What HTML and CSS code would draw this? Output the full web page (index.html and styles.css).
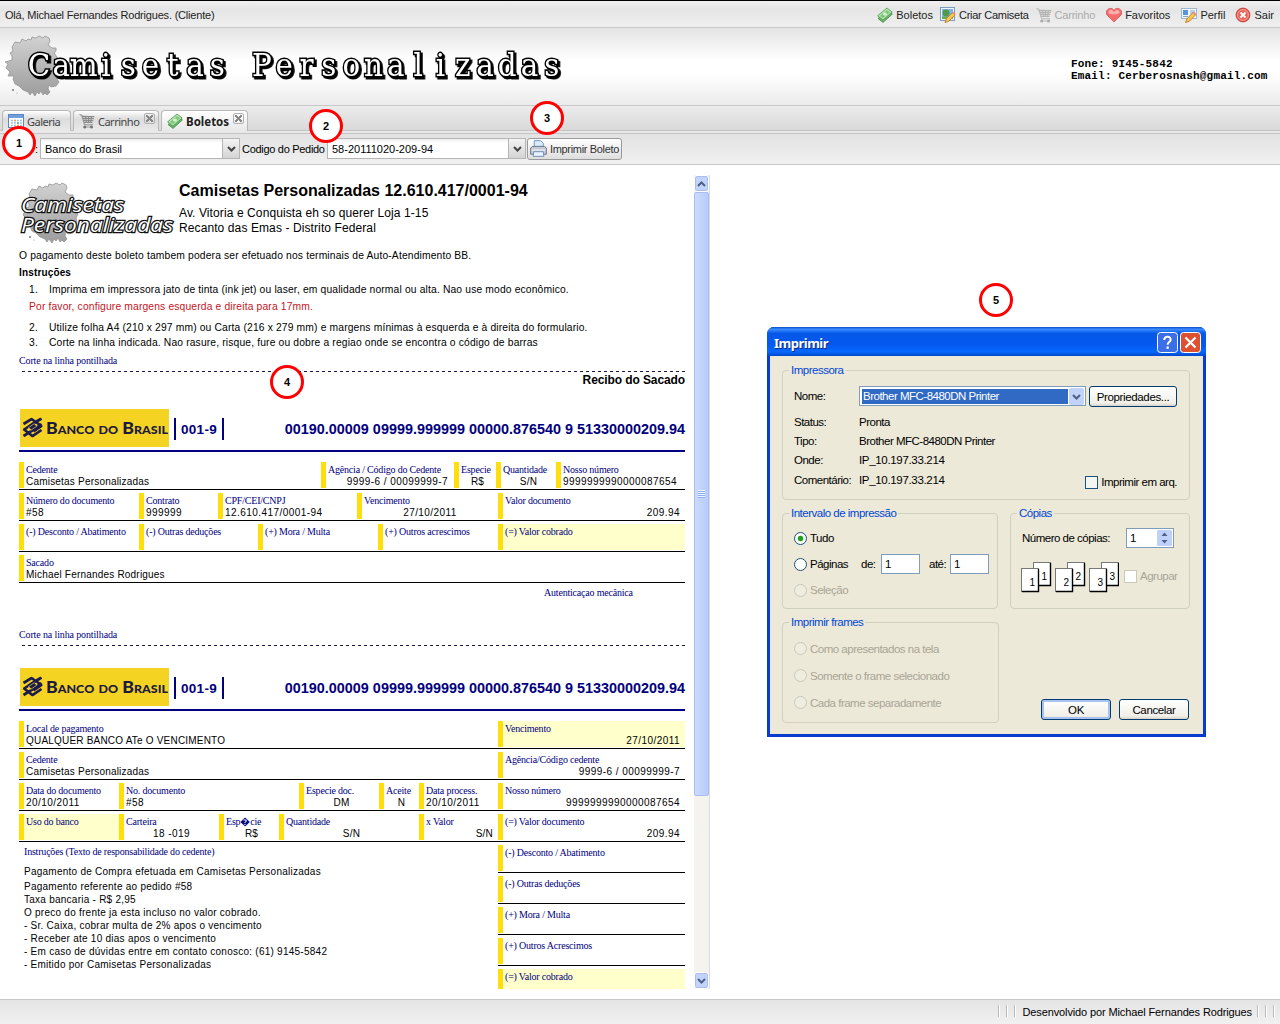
FILE: index.html
```html
<!DOCTYPE html>
<html lang="pt-BR">
<head>
<meta charset="utf-8">
<title>Camisetas Personalizadas</title>
<link rel="stylesheet" href="styles.css">
</head>
<body>
<svg class="defs" aria-hidden="true">
  <symbol id="i-money" viewBox="0 0 16 16">
    <path d="M1 11.5 10.5 3.5 15.4 7 6 15.4z" fill="#6fb56c" stroke="#3f8a45" stroke-width=".8"/>
    <path d="M.6 8.8 10 1 15.2 5 6 13z" fill="#b4e2ae" stroke="#4a9a50" stroke-width=".8"/>
    <path d="M3 9 10 3.2 12.9 5.2 6 11z" fill="#7cc77a"/>
    <ellipse cx="8" cy="7.1" rx="2" ry="1.7" fill="#d5f2d0"/>
  </symbol>
  <symbol id="i-picedit" viewBox="0 0 16 16">
    <rect x=".5" y=".5" width="14" height="13" fill="#eef4fa" stroke="#7d9cc0"/>
    <rect x="2" y="2" width="11" height="10" fill="#7fb4e4"/>
    <circle cx="6" cy="6" r="3.4" fill="#4e9a4a"/><path d="M2 9.5H13V12H2z" fill="#67ad5c"/>
    <path d="M5 15.5 6.2 11.8 12.5 5.5 15 8 8.6 14.4z" fill="#f8c64c" stroke="#b0762a" stroke-width=".8"/>
    <path d="M12 6 13.4 4.6 15.6 7 14.4 8.4z" fill="#e89080"/>
  </symbol>
  <symbol id="i-cart" viewBox="0 0 16 16">
    <path d="M1 2 15.5 3.5 13.5 9.5 5 10z" fill="#c9c9c9"/>
    <path d="M.5 1.5 3 2.2 5.5 11.8H14M3.4 3.5H15.4M4 5.5H14.8M4.5 7.5H14.2M5 9.5H13.5M6.5 3.5 7.5 9.5M9.5 3.5V9.5M12.5 3.5 11.5 9.5" fill="none" stroke="#858585" stroke-width=".9"/>
    <path d="M4 14H14" stroke="#999"/>
    <circle cx="5.8" cy="14" r="1.5" fill="#777"/><circle cx="12.5" cy="14" r="1.5" fill="#777"/>
  </symbol>
  <symbol id="i-heart" viewBox="0 0 16 16">
    <path d="M8 14.8 1.2 8.2C-1 5 1.4 1.4 4.6 1.4 6.4 1.4 7.5 2.4 8 3.4 8.5 2.4 9.6 1.4 11.4 1.4 14.6 1.4 17 5 14.8 8.2z" fill="#f56e6e" stroke="#d64545" stroke-width=".8"/>
    <path d="M2.5 6C2.4 4 3.6 2.8 5 2.8 6.6 3 7.4 4 8 5.2 9 3.4 10 2.8 11.6 2.9 13 3.2 13.8 4.4 13.5 6 11 7.6 5 7.8 2.5 6z" fill="#fbb0ae"/>
  </symbol>
  <symbol id="i-vcard" viewBox="0 0 16 16">
    <rect x=".5" y="1.5" width="15" height="10" fill="#f2f7fc" stroke="#a0b4cc"/>
    <rect x="2" y="3" width="5" height="5" fill="#5a93d6"/><path d="M9 4H14M9 6H14M2 9.5H7" stroke="#7fa6cf"/>
    <path d="M4.5 15.5 5.8 12 12 5.5 14.5 8 8.3 14.4z" fill="#f8c64c" stroke="#b0762a" stroke-width=".8"/>
    <path d="M11.6 6 13 4.6 15.4 7 14 8.4z" fill="#e89080"/>
  </symbol>
  <symbol id="i-cancel" viewBox="0 0 16 16">
    <circle cx="8" cy="8" r="6.9" fill="#e8655a" stroke="#c93c34"/>
    <circle cx="8" cy="8" r="5.4" fill="none" stroke="#f6a59d" stroke-width=".9"/>
    <path d="M5.5 5.5 10.5 10.5M10.5 5.5 5.5 10.5" stroke="#fff" stroke-width="1.8"/>
  </symbol>
  <symbol id="i-cal" viewBox="0 0 16 16">
    <rect x=".5" y="1.5" width="15" height="13" fill="#fff" stroke="#5f87bf"/>
    <rect x="1" y="2" width="14" height="3" fill="#6d9fdd"/>
    <path d="M3 7.5H14M3 10H14M3 12.5H14" stroke="#9ab9dc" stroke-width="1.6" stroke-dasharray="1.8 1.2"/>
    <path d="M6 7.5H8M9 12.5H11" stroke="#e8a55a" stroke-width="1.6"/><path d="M9 10H11" stroke="#79bf6e" stroke-width="1.6"/>
  </symbol>
  <symbol id="i-print" viewBox="0 0 16 16">
    <path d="M4 7V.6H10L12.5 3V7z" fill="#d6ebfb" stroke="#6e97c4" stroke-width=".9"/>
    <path d="M.6 7.5 2.5 6H13.5L15.4 7.5V13.4H.6z" fill="#c5cbd6" stroke="#6a7280" stroke-width=".9"/>
    <path d="M1.5 9.5H14.5" stroke="#f2f4f8"/>
    <path d="M3.5 11H12.5L13 15.4H3z" fill="#e6f2fc" stroke="#6e8fb5" stroke-width=".9"/>
  </symbol>
  <symbol id="splat" viewBox="0 0 60 62">
    <path d="M22 6 24 4 27 5 28 2 32 3 35 1 39 3 41 1 45 3 46 6 44 10 48 13 52 13 52 16 50 18 53 22 52 26 54 30 57 32 55 36 56 40 53 44 55 47 52 51 47 52 45 50 44 54 46 57 43 60 41 58 39 60 37 56 35 59 33 57 31 61 28 57 26 60 24 57 19 55 15 51 11 49 9 44 10 41 4 41 6 37 2 33 4 29 1 27 8 25 8 21 6 18 9 16 8 12 11 7 16 8 18 4z" fill="url(#splatfill)" stroke="#949494" stroke-width=".8"/>
    <circle cx="9" cy="55" r="1" fill="#777"/><circle cx="13" cy="58" r=".6" fill="#999"/>
  </symbol>
  <linearGradient id="splatfill" x1="0" y1="0" x2="0" y2="1"><stop offset="0" stop-color="#d2d2d2"/><stop offset="1" stop-color="#9c9c9c"/></linearGradient>
  <symbol id="bb" viewBox="0 0 20 20">
    <path d="M1 6.5 9 1.5 19 8.5 11 14M19 1 10 6.5 1 12.5M1 11.5 10 18.5 19 12.5M1 18.5 10 13 19 6.5" fill="none" stroke="#1d1a4e" stroke-width="2.7"/>
    <path d="M5 9 10 5.5 15 9.5 10 13z" fill="#1d1a4e"/>
    <path d="M5.5 10.5 12 6M8 13 14.5 8.5" stroke="#c9b748" stroke-width=".8"/>
  </symbol>
</svg>

<div class="userbar">
  <span class="hello">Olá, Michael Fernandes Rodrigues. (Cliente)</span>
  <nav class="menu">
    <a class="m1"><svg><use href="#i-money"/></svg>Boletos</a>
    <a class="m2"><svg><use href="#i-picedit"/></svg>Criar Camiseta</a>
    <a class="m3 off"><svg><use href="#i-cart"/></svg>Carrinho</a>
    <a class="m4"><svg><use href="#i-heart"/></svg>Favoritos</a>
    <a class="m5"><svg><use href="#i-vcard"/></svg>Perfil</a>
    <a class="m6"><svg><use href="#i-cancel"/></svg>Sair</a>
  </nav>
</div>

<header class="banner">
  <svg class="brand" width="580" height="77" viewBox="0 28 580 77">
    <use href="#splat" x="4" y="35" width="60" height="62"/>
    <g transform="scale(.92 1)">
      <text class="brand-text" y="76" x="42.4 66.6 90.9 115.1 139.4 163.6 187.8 212.1 236.3 260.6 284.8 309 333.3 357.5 381.8 406 430.2 454.5 478.7 503 527.2 551.4 575.7 599.9">Camisetas Personalizadas</text>
    </g>
  </svg>
  <div class="contact"><div>Fone: 9I45-5842</div><div>Email: Cerberosnash@gmail.com</div></div>
</header>

<div class="tabs">
  <div class="tab t1"><svg><use href="#i-cal"/></svg><span>Galeria</span></div>
  <div class="tab t2"><svg><use href="#i-cart"/></svg><span>Carrinho</span><i class="x"></i></div>
  <div class="tab t3 active"><svg><use href="#i-money"/></svg><span>Boletos</span><i class="x"></i></div>
</div>

<div class="toolbar">
  <span class="lb1">:</span>
  <div class="combo c1"><span>Banco do Brasil</span><b><svg viewBox="0 0 9 6"><path d="M1 1 4.5 4.5 8 1" fill="none" stroke="#444" stroke-width="2"/></svg></b></div>
  <span class="lb2">Codigo do Pedido</span>
  <div class="combo c2"><span>58-20111020-209-94</span><b><svg viewBox="0 0 9 6"><path d="M1 1 4.5 4.5 8 1" fill="none" stroke="#444" stroke-width="2"/></svg></b></div>
  <div class="print"><svg><use href="#i-print"/></svg><span>Imprimir Boleto</span></div>
</div>

<main class="content">
  <div class="frame">
    <article class="boleto">
      <div class="head">
        <svg class="logo" width="158" height="70" viewBox="18 180 158 70">
          <use href="#splat" x="21" y="182" width="60" height="62"/>
          <text class="logo-text" x="21" y="212" textLength="103" lengthAdjust="spacingAndGlyphs">Camisetas</text>
          <text class="logo-text" x="21" y="232" textLength="152" lengthAdjust="spacingAndGlyphs">Personalizadas</text>
        </svg>
        <div class="co">
          <h1>Camisetas Personalizadas 12.610.417/0001-94</h1>
          <p>Av. Vitoria e Conquista eh so querer Loja 1-15</p>
          <p>Recanto das Emas - Distrito Federal</p>
        </div>
      </div>
      <div class="notes">
        <p class="n0">O pagamento deste boleto tambem podera ser efetuado nos terminais de Auto-Atendimento BB.</p>
        <p class="l17 strong">Instruções</p>
        <p class="l17 li"><span>1.</span>Imprima em impressora jato de tinta (ink jet) ou laser, em qualidade normal ou alta. Nao use modo econômico.</p>
        <p class="red">Por favor, configure margens esquerda e direita para 17mm.</p>
        <p class="li second"><span>2.</span>Utilize folha A4 (210 x 297 mm) ou Carta (216 x 279 mm) e margens mínimas à esquerda e à direita do formulario.</p>
        <p class="li third"><span>3.</span>Corte na linha indicada. Nao rasure, risque, fure ou dobre a regiao onde se encontra o código de barras</p>
      </div>
      <div class="cut cut1">Corte na linha pontilhada</div>
      <div class="recibo">Recibo do Sacado</div>

      <div class="bank">
        <svg width="149" height="38" viewBox="0 0 149 38"><rect width="149" height="38" fill="#f4d322"/><use href="#bb" x="2.5" y="8.5" width="20" height="20"/><text class="bb-text" x="26" y="25" textLength="122" lengthAdjust="spacingAndGlyphs">Banco do Brasil</text></svg>
        <span class="code">001-9</span>
        <span class="num">00190.00009 09999.999999 00000.876540 9 51330000209.94</span>
      </div>
      <div class="rows">
        <div class="row r1">
          <div><em>Cedente</em><p>Camisetas Personalizadas</p></div>
          <div class="rt7"><em>Agência / Código do Cedente</em><p class="d">9999-6 / 00099999-7</p></div>
          <div class="ct"><em>Especie</em><p>R$</p></div>
          <div class="ct"><em>Quantidade</em><p>S/N</p></div>
          <div><em>Nosso número</em><p class="d">9999999990000087654</p></div>
        </div>
        <div class="row r2">
          <div><em>Número do documento</em><p class="d">#58</p></div>
          <div><em>Contrato</em><p class="d">999999</p></div>
          <div><em>CPF/CEI/CNPJ</em><p class="d">12.610.417/0001-94</p></div>
          <div class="ct"><em>Vencimento</em><p class="d">27/10/2011</p></div>
          <div class="rt"><em>Valor documento</em><p class="d">209.94</p></div>
        </div>
        <div class="row r3">
          <div><em>(-) Desconto / Abatimento</em></div>
          <div><em>(-) Outras deduções</em></div>
          <div><em>(+) Mora / Multa</em></div>
          <div><em>(+) Outros acrescimos</em></div>
          <div class="hl"><em>(=) Valor cobrado</em></div>
        </div>
        <div class="row r4"><div><em>Sacado</em><p>Michael Fernandes Rodrigues</p></div></div>
      </div>
      <div class="aut">Autenticaçao mecânica</div>
      <div class="cut cut2">Corte na linha pontilhada</div>

      <div class="bank bank2">
        <svg width="149" height="38" viewBox="0 0 149 38"><rect width="149" height="38" fill="#f4d322"/><use href="#bb" x="2.5" y="8.5" width="20" height="20"/><text class="bb-text" x="26" y="25" textLength="122" lengthAdjust="spacingAndGlyphs">Banco do Brasil</text></svg>
        <span class="code">001-9</span>
        <span class="num">00190.00009 09999.999999 00000.876540 9 51330000209.94</span>
      </div>
      <div class="rows">
        <div class="row r5">
          <div><em>Local de pagamento</em><p>QUALQUER BANCO ATe O VENCIMENTO</p></div>
          <div class="rt hl"><em>Vencimento</em><p class="d">27/10/2011</p></div>
        </div>
        <div class="row r5">
          <div><em>Cedente</em><p>Camisetas Personalizadas</p></div>
          <div class="rt"><em>Agência/Código cedente</em><p class="d">9999-6 / 00099999-7</p></div>
        </div>
        <div class="row r6">
          <div><em>Data do documento</em><p class="d">20/10/2011</p></div>
          <div><em>No. documento</em><p class="d">#58</p></div>
          <div class="ct"><em>Especie doc.</em><p>DM</p></div>
          <div class="ct"><em>Aceite</em><p>N</p></div>
          <div><em>Data process.</em><p class="d">20/10/2011</p></div>
          <div class="rt"><em>Nosso número</em><p class="d">9999999990000087654</p></div>
        </div>
        <div class="row r7">
          <div class="hl"><em>Uso do banco</em></div>
          <div class="ct"><em>Carteira</em><p class="d">18 -019</p></div>
          <div class="ct"><em>Esp&#xFFFD;cie</em><p>R$</p></div>
          <div class="ct"><em>Quantidade</em><p>S/N</p></div>
          <div class="rt"><em>x Valor</em><p>S/N</p></div>
          <div class="rt"><em>(=) Valor documento</em><p class="d">209.94</p></div>
        </div>
      </div>
      <div class="bottom">
        <div class="inst">
          <em>Instruções (Texto de responsabilidade do cedente)</em>
          <p class="first">Pagamento de Compra efetuada em Camisetas Personalizadas</p>
          <p>Pagamento referente ao pedido #58</p>
          <p>Taxa bancaria - R$ 2,95</p>
          <p>O preco do frente ja esta incluso no valor cobrado.</p>
          <p>- Sr. Caixa, cobrar multa de 2% apos o vencimento</p>
          <p>- Receber ate 10 dias apos o vencimento</p>
          <p>- Em caso de dúvidas entre em contato conosco: (61) 9145-5842</p>
          <p>- Emitido por Camisetas Personalizadas</p>
        </div>
        <div class="side">
          <div class="row"><div><em>(-) Desconto / Abatimento</em></div></div>
          <div class="row"><div><em>(-) Outras deduções</em></div></div>
          <div class="row"><div><em>(+) Mora / Multa</em></div></div>
          <div class="row"><div><em>(+) Outros Acrescimos</em></div></div>
          <div class="row last"><div class="hl"><em>(=) Valor cobrado</em></div></div>
        </div>
      </div>
    </article>
    <div class="scroll">
      <div class="sb"><svg viewBox="0 0 9 6"><path d="M1 5 4.5 1.5 8 5" fill="none" stroke="#4d6185" stroke-width="2"/></svg></div>
      <div class="thumb"><i></i></div>
      <div class="sb down"><svg viewBox="0 0 9 6"><path d="M1 1 4.5 4.5 8 1" fill="none" stroke="#4d6185" stroke-width="2"/></svg></div>
    </div>
  </div>

  <section class="dialog">
    <div class="title"><strong>Imprimir</strong>
      <svg class="tb help" viewBox="0 0 21 21"><rect x=".5" y=".5" width="20" height="20" rx="3" fill="#3a6fe8" stroke="#fff"/><path d="M7.2 8C7.2 3.6 14 3.8 13.6 7.8 13.4 10 10.6 10.2 10.6 12.8" fill="none" stroke="#fff" stroke-width="2"/><rect x="9.5" y="14.5" width="2.3" height="2.3" fill="#fff"/></svg>
      <svg class="tb" viewBox="0 0 21 21"><rect x=".5" y=".5" width="20" height="20" rx="3" fill="#dd5130" stroke="#fff"/><path d="M5.5 5.5 15.5 15.5M15.5 5.5 5.5 15.5" stroke="#fff" stroke-width="2.2"/></svg>
    </div>
    <div class="body">
      <fieldset class="g1"><legend>Impressora</legend>
        <div class="f nome"><label>Nome:</label><div class="sel"><span>Brother MFC-8480DN Printer</span><b><svg viewBox="0 0 9 6"><path d="M1 1 4.5 4.5 8 1" fill="none" stroke="#4d6185" stroke-width="2"/></svg></b></div><div class="btn prop">Propriedades...</div></div>
        <div class="f"><label>Status:</label><span>Pronta</span></div>
        <div class="f"><label>Tipo:</label><span>Brother MFC-8480DN Printer</span></div>
        <div class="f"><label>Onde:</label><span class="ip">IP_10.197.33.214</span></div>
        <div class="f"><label>Comentário:</label><span class="ip">IP_10.197.33.214</span><div class="arq"><i class="chk"></i><span>Imprimir em arq.</span></div></div>
      </fieldset>
      <div class="pair">
        <fieldset class="g2"><legend>Intervalo de impressão</legend>
          <div class="o"><i class="rad on"></i>Tudo</div>
          <div class="o"><i class="rad"></i><span class="pg">Páginas</span><span class="de">de:</span><span class="inp">1</span><span class="ate">até:</span><span class="inp">1</span></div>
          <div class="o dis"><i class="rad"></i>Seleção</div>
        </fieldset>
        <fieldset class="g3"><legend>Cópias</legend>
          <div class="cp"><span>Número de cópias:</span><div class="spin"><span>1</span><b><svg viewBox="0 0 15 16"><rect width="15" height="16" rx="1.5" fill="#bfd0fa"/><path d="M4.5 6 7.5 2.5 10.5 6zM4.5 10 7.5 13.5 10.5 10z" fill="#4d6185"/></svg></b></div></div>
          <div class="pgs">
            <svg width="98" height="31" viewBox="0 0 98 31">
              <g id="pg"><rect x="12.5" y=".5" width="17" height="23" fill="#fff" stroke="#777"/><path d="M13 23.5H29.5V1" fill="none" stroke="#000" stroke-width="1.4"/><rect x=".5" y="6.5" width="17" height="23" fill="#fff" stroke="#777"/><path d="M1 29.5H17.5V7" fill="none" stroke="#000" stroke-width="1.4"/></g>
              <use href="#pg" x="34"/><use href="#pg" x="68"/>
              <g class="pn"><text x="8.5" y="24">1</text><text x="20.5" y="18">1</text><text x="42.5" y="24">2</text><text x="54.5" y="18">2</text><text x="76.5" y="24">3</text><text x="88.5" y="18">3</text></g>
            </svg>
            <i class="chk cd"></i><span class="agr">Agrupar</span>
          </div>
        </fieldset>
      </div>
      <div class="pair p2">
        <fieldset class="g4"><legend>Imprimir frames</legend>
          <div class="o dis"><i class="rad"></i><span>Como apresentados na tela</span></div>
          <div class="o dis"><i class="rad"></i><span>Somente o frame selecionado</span></div>
          <div class="o dis"><i class="rad"></i><span>Cada frame separadamente</span></div>
        </fieldset>
        <div class="btns"><div class="btn def">OK</div><div class="btn">Cancelar</div></div>
      </div>
    </div>
  </section>
</main>

<footer class="foot"><i></i><i></i><i></i><span>Desenvolvido por Michael Fernandes Rodrigues</span><i></i><i></i><i></i></footer>

<div class="badge b1">1</div>
<div class="badge b2">2</div>
<div class="badge b3">3</div>
<div class="badge b4">4</div>
<div class="badge b5">5</div>
</body>
</html>
```
FILE: styles.css
```css
* { box-sizing: border-box; }
html, body { margin: 0; padding: 0; }
body {
  width: 1280px; height: 1024px; overflow: hidden; position: relative;
  display: flex; flex-direction: column; background: #fff; color: #222;
  font: 11px "Liberation Sans", Arial, sans-serif;
}
p, h1 { margin: 0; }
em, i { font-style: normal; }
.defs { position: absolute; width: 0; height: 0; }

/* user bar */
.userbar { height: 28px; display: flex; align-items: center; justify-content: space-between; padding: 1px 6px 0 5px; border-top: 1px solid #000; border-bottom: 1px solid #c8c8c8; background: linear-gradient(#f0f0f0, #e5e5e5 30%, #efefef); white-space: nowrap; }
.hello { letter-spacing: -.19px; padding-top: 1px; }
.menu { display: flex; }
.menu a { display: flex; align-items: center; gap: 3px; }
.menu svg { width: 16px; height: 16px; }
.menu .m2 { margin-left: 7px; letter-spacing: -.27px; }
.menu .m3 { margin-left: 7px; letter-spacing: -.2px; }
.menu .m4 { margin-left: 11px; }
.menu .m5 { margin-left: 11px; }
.menu .m6 { margin-left: 10px; }
.off { color: #aaa; }
.off svg { opacity: .55; }

/* banner */
.banner { height: 78px; display: flex; justify-content: space-between; border-bottom: 1px solid #c8c8c8; background: linear-gradient(#e4e4e4, #fff 42%, #fff 60%, #ebebeb); }
.brand-text { font: 32px "DejaVu Serif", serif; fill: #fff; stroke: #000; stroke-width: 3px; paint-order: stroke; text-anchor: middle; filter: drop-shadow(2px 2px 0 #000); }
.contact { width: 209px; padding-top: 30px; font: bold 11px/12px "Liberation Mono", monospace; letter-spacing: .18px; color: #000; white-space: nowrap; }

/* tabs */
.tabs { height: 28px; display: flex; gap: 2px; padding: 4px 2px 2px; border-bottom: 1px solid #c4c4c4; background: linear-gradient(#ececec, #d9d9d9 24px, #c4c4c4 24px 25px, #e8e8e8 25px); }
.tab { height: 21px; display: flex; align-items: center; border: 1px solid #b8b8b8; border-bottom: 0; border-radius: 4px 4px 0 0; background: linear-gradient(#fff, #dcdcdc 40%, #e9e9e9); padding-left: 5px; font: 11px "Noto Sans", sans-serif; letter-spacing: -.5px; color: #444; white-space: nowrap; }
.tab svg { width: 16px; height: 16px; margin-right: 3px; flex: none; }
.t1 { width: 69px; }
.t2 { width: 86px; }
.t3 { width: 87px; }
.tab.active { background: linear-gradient(#fff, #e8e8e8); color: #222; font-size: 11.5px; font-weight: bold; letter-spacing: 0; }
.x { width: 11px; height: 11px; margin: -5px 3px 0 auto; border: 1px solid #b0b0b0; border-radius: 2px; background: linear-gradient(45deg, transparent 42%, #888 42% 58%, transparent 58%) center / 7px 7px no-repeat, linear-gradient(-45deg, transparent 42%, #888 42% 58%, transparent 58%) center / 7px 7px no-repeat; }

/* toolbar */
.toolbar { height: 31px; display: flex; align-items: center; border-bottom: 1px solid #c8c8c8; background: linear-gradient(#e2e2e2, #f0f0f0); padding: 0 0 1px 35px; white-space: nowrap; color: #000; }
.lb1 { width: 5px; }
.lb2 { width: 87px; padding-left: 2px; letter-spacing: -.3px; }
.combo { height: 21px; display: flex; align-items: center; border: 1px solid #b5b5b5; background: linear-gradient(#eee, #fff 4px); padding-left: 4px; }
.combo b { margin-left: auto; width: 17px; height: 19px; border-left: 1px solid #b5b5b5; background: linear-gradient(#f4f4f4, #d4d4d4); display: grid; place-items: center; }
.combo b svg { width: 9px; height: 6px; }
.c1 { width: 200px; }
.c2 { width: 199px; }
.print { width: 95px; height: 22px; margin-left: 1px; display: flex; align-items: center; gap: 3px; padding-left: 2px; border: 1px solid #999; border-radius: 3px; background: linear-gradient(#fff, #dedede); color: #333; letter-spacing: -.33px; }
.print svg { width: 17px; height: 17px; flex: none; }

/* content */
.content { height: 834px; display: flex; align-items: flex-start; }
.frame { margin-top: 10px; width: 710px; height: 814px; display: flex; overflow: hidden; }
.boleto { width: 685px; padding-left: 19px; font-size: 10px; color: #000; white-space: nowrap; letter-spacing: .2px; }
.head { height: 73px; display: flex; }
.logo { margin: 5px 0 0 -1px; flex: none; }
.logo-text { font: italic 400 20px "Open Sans", sans-serif; fill: #fff; stroke: #111; stroke-width: 2.4px; paint-order: stroke; letter-spacing: 0; }
.co { padding: 6px 0 0 3px; }
.co h1 { font: bold 16px/19px "Liberation Sans", sans-serif; letter-spacing: 0; padding-bottom: 6px; }
.co p { font-size: 12px; line-height: 15px; letter-spacing: .1px; }
.notes { font-size: 10.3px; letter-spacing: .15px; }
.n0 { line-height: 16px; }
.l17 { line-height: 17px; }
.strong { font-weight: bold; font-size: 10px; }
.li { padding-left: 10px; display: flex; }
.li span { width: 20px; }
.red { padding-left: 10px; line-height: 18px; color: #c8141e; }
.second { margin-top: 4px; line-height: 15px; }
.third { line-height: 16px; }
.cut, .aut, em { font-family: "Liberation Serif", "Times New Roman", serif; font-size: 10px; color: #000080; letter-spacing: -.2px; }
.cut { height: 19px; line-height: 15px; letter-spacing: -.13px; background: repeating-linear-gradient(90deg, #1a1a44 0 3px, transparent 3px 6px) 3px 18px / 100% 1px no-repeat; }
.cut1 { margin-top: 2px; }
.recibo { height: 16px; line-height: 16px; font-size: 12px; font-weight: bold; text-align: right; letter-spacing: -.1px; }
.bank { margin: 21px 0 10px; height: 43px; display: flex; border-bottom: 2px solid #000080; padding-left: 1px; color: #000080; font-weight: bold; }
.bank2 { margin-top: 22px; }
.bank svg { flex: none; }
.bb-text { font: 900 17px Lato, sans-serif; font-variant-caps: small-caps; fill: #1d1a3e; letter-spacing: 0; }
.code { margin: 9px 0 0 5px; width: 50px; height: 22px; line-height: 23px; border: solid #000080; border-width: 0 2px; font-size: 13.5px; text-align: center; letter-spacing: .3px; }
.num { margin-left: auto; padding-top: 9px; font-size: 14.4px; line-height: 22px; letter-spacing: 0; }
.row { display: grid; height: 28px; padding-bottom: 1px; border-bottom: 1px solid #000; margin-bottom: 3px; }
.row > div { height: 26px; border-left: 5px solid #ffdf0a; padding: 2px 0 0 2px; }
.row em { display: block; line-height: 11px; }
.row p { line-height: 12px; padding-top: 1px; }
.row .d { letter-spacing: .44px; }
.row .ct p { text-align: center; margin-left: -2px; }
.row .rt p { text-align: right; margin-right: 5px; }
.row .rt7 p { text-align: right; margin-right: 6px; }
.row .hl { background: #ffffcc; }
.r1 { grid-template-columns: 302px 133px 42px 60px 129px; }
.r2 { grid-template-columns: 120px 79px 139px 141px 187px; }
.r3 { grid-template-columns: 120px 119px 120px 120px 187px; }
.r5 { grid-template-columns: 479px 187px; }
.r6 { grid-template-columns: 100px 180px 80px 40px 79px 187px; }
.r7 { grid-template-columns: 100px 100px 60px 140px 79px 187px; }
.aut { height: 14px; line-height: 14px; padding-left: 525px; }
.cut2 { margin-top: 27px; }
.bottom { display: flex; }
.inst { width: 479px; padding-left: 5px; letter-spacing: .25px; }
.inst em { display: block; line-height: 14px; }
.inst p { line-height: 13px; }
.inst .first { padding: 6px 0 2px; }
.side { width: 187px; }

/* scroll bar */
.scroll { margin-left: 9px; width: 16px; height: 814px; display: flex; flex-direction: column; background: #f4f3ee; border-right: 1px solid #d8dce6; }
.sb { height: 17px; display: grid; place-items: center; border: 1px solid #fff; border-radius: 3px; background: #c3d3fd; box-shadow: inset 0 0 0 1px #a9bdf0; }
.sb svg { width: 9px; height: 6px; }
.thumb { height: 604px; border: 1px solid #a9bdf0; border-radius: 2px; background: linear-gradient(90deg, #cbdafe, #b9cbfb); display: grid; place-items: center; }
.thumb i { width: 7px; height: 8px; background: repeating-linear-gradient(#eef4fe 0 1px, #8cb0f8 1px 2px); }
.down { margin-top: auto; }

/* print dialog */
.dialog { margin: 162px 0 0 57px; width: 439px; height: 410px; border: solid #0a3bd0; border-width: 0 3px 3px; border-radius: 7px 7px 0 0; background: #0a3bd0; color: #000; font-size: 11.5px; letter-spacing: -.5px; white-space: nowrap; }
.title { height: 29px; margin: 0 -3px; padding: 2px 5px 0 7px; display: flex; align-items: center; border-radius: 7px 7px 0 0; background: linear-gradient(#0b4fc8, #3b8bff 8%, #0558e8 22%, #0458ee 60%, #0568ff 85%, #0348c8); }
.title strong { font: bold 13px "Noto Sans", sans-serif; color: #fff; text-shadow: 1px 1px #0a2a80; margin-right: auto; }
.tb { width: 21px; height: 21px; margin-left: 2px; }
.body { height: 378px; background: #ece9d8; padding: 7px 13px 0 12px; }
fieldset { margin: 0; padding: 0; min-width: 0; border: 1px solid #d0d0bf; border-radius: 4px; }
legend { margin-left: 6px; padding: 0 2px; height: 14px; line-height: 14px; color: #0046d5; }
.g1 { height: 137px; width: 408px; }
.f { height: 19.4px; display: flex; align-items: center; padding-left: 11px; }
.f label { width: 65px; }
.nome { height: 20px; margin: 9px 0 6px; }
.sel { width: 227px; height: 20px; border: 1px solid #7f9db9; background: #fff; display: flex; padding: 2px 1px 1px 2px; }
.sel span { width: 206px; height: 15px; line-height: 15px; padding-left: 1px; background: #316ac5; color: #fff; }
.sel b { margin: -1px 0 0 auto; width: 15px; height: 17px; border-radius: 2px; background: #c1d3fb; display: grid; place-items: center; }
.sel svg { width: 9px; height: 6px; }
.btn { width: 70px; height: 21px; line-height: 20px; border: 1px solid #003c74; border-radius: 3px; background: linear-gradient(#fff, #f0efe8 85%, #d8d2c4); text-align: center; letter-spacing: -.35px; }
.prop { width: 88px; margin-left: 3px; }
.def { box-shadow: inset 0 0 0 2px #a8c2f0; }
.ip { letter-spacing: -.33px; }
.arq { display: flex; align-items: center; gap: 3px; margin: 5px 12px 0 auto; }
.chk { width: 13px; height: 13px; border: 1px solid #1c5180; background: #f4f4f0; }
.pair { display: flex; justify-content: space-between; margin-top: 6px; width: 408px; }
.g2 { width: 216px; height: 103px; }
.g3 { width: 180px; height: 103px; }
.o { height: 26px; display: flex; align-items: center; padding-left: 11px; }
.g2 .o:first-of-type { margin-top: 5px; }
.rad { width: 13px; height: 13px; border: 1px solid #1c5180; border-radius: 50%; background: #fff; margin-right: 3px; flex: none; }
.on { background: radial-gradient(#21a121 0 2.4px, #fff 3.2px); }
.dis { color: #a8a596; }
.dis .rad { border-color: #cac8bb; background: #efede0; }
.pg { width: 51px; }
.de { width: 16px; }
.ate { width: 17px; margin-left: 9px; }
.inp { width: 39px; height: 20px; line-height: 18px; padding-left: 3px; border: 1px solid #7f9db9; background: #fff; margin-left: 4px; }
.cp { display: flex; align-items: center; height: 20px; margin: 8px 15px 0 11px; justify-content: space-between; }
.spin { width: 48px; height: 20px; line-height: 18px; padding-left: 3px; border: 1px solid #7f9db9; background: #fff; display: flex; justify-content: space-between; }
.spin b svg { width: 15px; height: 16px; margin: 1px; display: block; }
.pgs { display: flex; align-items: center; margin: 14px 0 0 10px; height: 31px; }
.pn { font-size: 10px; }
.pgs .chk { margin: -3px 3px 0 5px; }
.cd { border-color: #cac8bb; background: #fff; }
.agr { color: #a8a596; margin-top: -3px; }
.g4 { width: 217px; height: 108px; }
.g4 .o { height: 27px; }
.g4 .o:first-of-type { margin-top: 6px; }
.btns { display: flex; gap: 8px; align-self: flex-end; margin: 0 1px 3px 0; }

/* footer */
.foot { height: 25px; display: flex; align-items: center; justify-content: flex-end; gap: 6px; padding: 0 5px 0 0; border-top: 1px solid #c8c8c8; background: linear-gradient(#e4e4e4, #f0f0f0); color: #000; white-space: nowrap; }
.foot span { letter-spacing: -.12px; padding-bottom: 1px; margin-right: -1px; }
.foot i { width: 2px; height: 12px; margin-bottom: 2px; border-left: 1px solid #bbb; border-right: 1px solid #fff; }

/* callouts */
.badge { position: absolute; width: 34px; height: 34px; border: 3px solid #f00; border-radius: 50%; background: #fff; color: #000; font: bold 11px/28px "Liberation Sans", sans-serif; text-align: center; }
.b1 { left: 2px; top: 126px; }
.b2 { left: 309px; top: 109px; }
.b3 { left: 530px; top: 101px; }
.b4 { left: 270px; top: 365px; }
.b5 { left: 979px; top: 283px; }
```
